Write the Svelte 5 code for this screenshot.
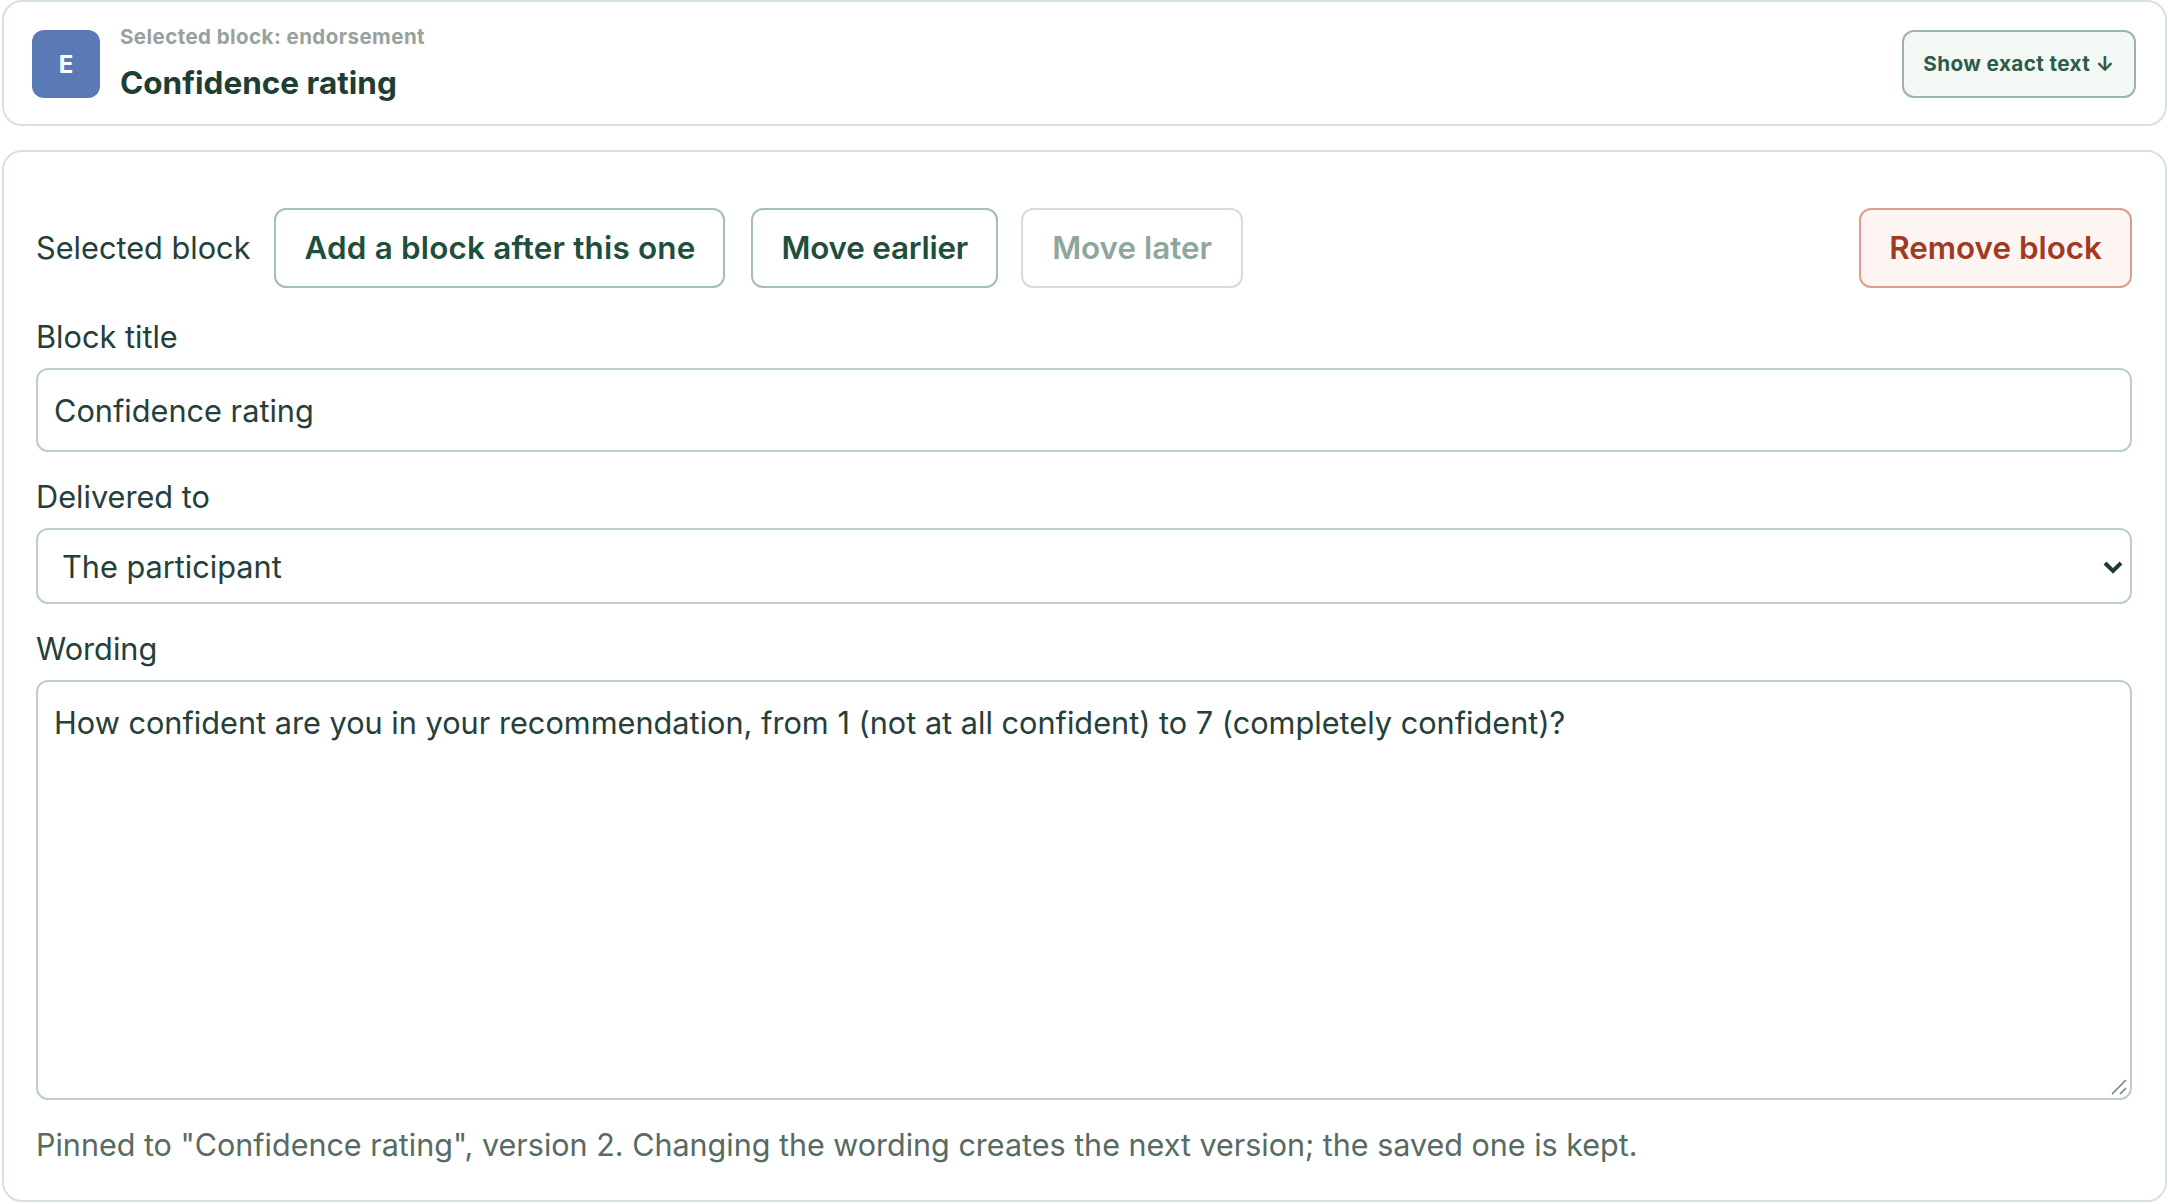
<script lang="ts">
	const blockTitle = 'Confidence rating';
	const wording =
		'How confident are you in your recommendation, from 1 (not at all confident) to 7 (completely confident)?';
	const recipients = ['The participant', 'The facilitator'];
</script>

<div class="page">
	<header class="card summary">
		<div class="badge">E</div>
		<div class="heading">
			<span class="eyebrow">Selected block: endorsement</span>
			<h2>{blockTitle}</h2>
		</div>
		<button class="exact" type="button">Show exact text ↓</button>
	</header>

	<section class="card editor">
		<div class="actions">
			<span class="actions-label">Selected block</span>
			<button class="btn add" type="button">Add a block after this one</button>
			<button class="btn earlier" type="button">Move earlier</button>
			<button class="btn later" type="button" disabled>Move later</button>
			<button class="btn danger" type="button">Remove block</button>
		</div>

		<label class="field first">
			<span>Block title</span>
			<input type="text" value={blockTitle} />
		</label>

		<label class="field">
			<span>Delivered to</span>
			<div class="control">
				<select>
					{#each recipients as recipient}
						<option>{recipient}</option>
					{/each}
				</select>
				<svg class="chevron" viewBox="0 0 20 14" aria-hidden="true">
					<path d="M2 3l8 8 8-8" fill="none" stroke="#1f3d34" stroke-width="4" />
				</svg>
			</div>
		</label>

		<label class="field">
			<span>Wording</span>
			<div class="control">
				<textarea value={wording}></textarea>
				<svg class="grip" viewBox="0 0 16 16" aria-hidden="true">
					<path d="M1 15L15 1M9 15l6-6" fill="none" stroke="#6f6f6f" stroke-width="1.4" />
				</svg>
			</div>
		</label>

		<p class="hint">
			Pinned to "Confidence rating", version 2. Changing the wording creates the next version; the
			saved one is kept.
		</p>
	</section>
</div>

<style>
	:global(body) {
		background: #fff;
		color: #24403a;
		font-family: Inter, 'Liberation Sans', sans-serif;
	}

	.page {
		display: flex;
		flex-direction: column;
		gap: 24px;
		margin: 0 1px 0 2px;
	}

	.card {
		box-sizing: border-box;
		background: #fff;
		border: 2px solid #d6e2dc;
		border-radius: 20px;
	}

	/* Summary card */
	.summary {
		display: flex;
		align-items: center;
		gap: 20px;
		height: 126px;
		padding: 2px 29px 0 28px;
	}

	.badge {
		display: grid;
		place-items: center;
		flex: none;
		width: 68px;
		height: 68px;
		border-radius: 12px;
		background: #5a7ab5;
		color: #fff;
		font-size: 24px;
		font-weight: 700;
	}

	.heading {
		display: flex;
		flex-direction: column;
		flex: 1;
		gap: 12px;
		margin-top: -2px;
	}

	.eyebrow {
		color: #97a29d;
		font-size: 20.5px;
		font-weight: 700;
		line-height: 28px;
		letter-spacing: 0.44px;
	}

	h2 {
		margin: 0;
		color: #1c3e33;
		font-size: 31.5px;
		font-weight: 700;
		line-height: 40px;
	}

	.exact {
		width: 234px;
		height: 68px;
		padding: 0 0 2px;
		background: #f3f8f5;
		border: 2px solid #9ab5a6;
		border-radius: 12px;
		color: #2c5c47;
		font: 700 20.7px Inter, sans-serif;
		letter-spacing: 0.4px;
	}

	/* Editor card */
	.editor {
		height: 1052px;
		padding: 56px 33px 0 32px;
	}

	.actions {
		display: flex;
		align-items: center;
		gap: 25px;
	}

	.actions-label {
		font-size: 30.7px;
		line-height: 48px;
		margin-right: -1px;
	}

	.btn {
		height: 80px;
		padding: 0 28px;
		background: #fff;
		border: 2px solid #a5bfb1;
		border-radius: 12px;
		color: #1f4f3c;
		font: 600 31.4px Inter, sans-serif;
	}

	.add {
		letter-spacing: 0.2px;
		margin-right: 1px;
	}

	.earlier {
		letter-spacing: -0.2px;
	}

	.later {
		padding: 0 29px;
		margin-left: -2px;
	}

	.btn:disabled {
		border-color: #d4dfd9;
		color: #8ea79b;
	}

	.danger {
		margin-left: auto;
		background: #fdf5f2;
		border-color: #dc9c90;
		color: #a03a25;
	}

	.field {
		display: block;
		margin-top: 21px;
	}

	.field.first {
		margin-top: 25px;
	}

	.field > span {
		display: block;
		margin-bottom: 7px;
		font-size: 30.7px;
		line-height: 48px;
	}

	input,
	select,
	textarea {
		display: block;
		box-sizing: border-box;
		width: 100%;
		background: #fff;
		border: 2px solid #bdcec7;
		border-radius: 12px;
		color: #24403a;
		font: 400 30.7px Inter, sans-serif;
		outline: none;
	}

	input {
		height: 84px;
		padding: 0 16px;
	}

	.control {
		position: relative;
	}

	select {
		height: 76px;
		padding: 0 24px;
		appearance: none;
	}

	.chevron {
		position: absolute;
		top: 32px;
		right: 9px;
		width: 20px;
		height: 14px;
		pointer-events: none;
	}

	textarea {
		height: 420px;
		padding: 22px 16px;
		line-height: 38px;
		resize: none;
	}

	.grip {
		position: absolute;
		right: 5px;
		bottom: 5px;
		width: 16px;
		height: 16px;
		pointer-events: none;
	}

	.hint {
		margin: 21px 0 0;
		color: #566b62;
		font-size: 30.5px;
		line-height: 48px;
	}
</style>
